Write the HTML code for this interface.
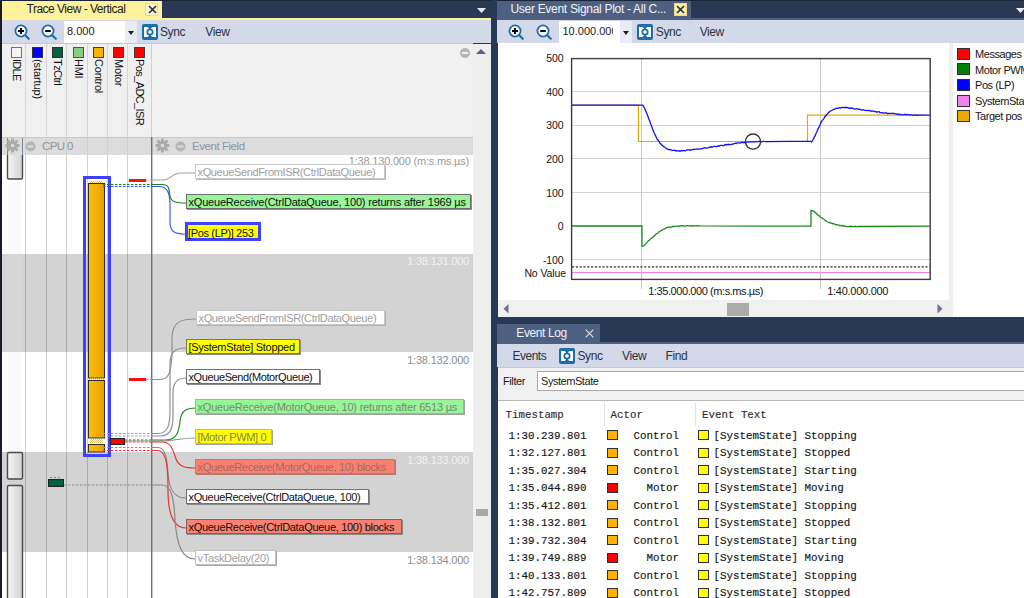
<!DOCTYPE html>
<html><head><meta charset="utf-8">
<style>
*{margin:0;padding:0;box-sizing:border-box}
html,body{width:1024px;height:598px;overflow:hidden;background:#293955;font-family:"Liberation Sans",sans-serif;font-size:12px;color:#000;position:relative}
.a{position:absolute}
.t{position:absolute;white-space:nowrap}
.mono{font-family:"Liberation Mono",monospace}
</style></head><body>
<div class="a" style="left:0px;top:0px;width:1024px;height:1px;background:#1b2336;"></div>
<div class="a" style="left:0px;top:0px;width:2px;height:598px;background:#171c28;"></div>
<div class="a" style="left:2px;top:20px;width:1px;height:578px;background:#5a6a8a;"></div>
<div class="a" style="left:2px;top:1px;width:160px;height:17px;background:#fff29d;"></div>
<span class="t " style="left:26.50px;top:3.04px;font-size:12px;line-height:12px;color:#1a1a1a;letter-spacing:-0.5px;">Trace View - Vertical</span>
<div class="a" style="left:145px;top:3px;width:13px;height:13px;background:#fff8cc;border:1px solid #eadc8c"></div>
<svg class="a" style="left:147.5px;top:5px" width="9" height="9" viewBox="0 0 9 9"><path d="M1 1L8 8M8 1L1 8" stroke="#1e2a44" stroke-width="1.6"/></svg>
<svg class="a" style="left:477px;top:8px" width="9" height="5"><path d="M0 0H9L4.5 5Z" fill="#e6e9f0"/></svg>
<div class="a" style="left:2px;top:18px;width:489px;height:2px;background:#fff29d;"></div>
<div class="a" style="left:2px;top:20px;width:489px;height:23px;background:#d3d9e8;"></div>
<div class="a" style="left:2px;top:43px;width:471px;height:1px;background:#c8c8c8;"></div>
<svg class="a" style="left:13px;top:23px" width="18" height="18" viewBox="0 0 18 18"><circle cx="8" cy="8" r="5.6" fill="#fff" stroke="#1c6eaa" stroke-width="1.8"/><path d="M12.2 12.2L15.8 15.8" stroke="#1c6eaa" stroke-width="2.2" stroke-linecap="round"/><path d="M5 8H11M8 5V11" stroke="#000" stroke-width="2"/></svg>
<svg class="a" style="left:40px;top:23px" width="18" height="18" viewBox="0 0 18 18"><circle cx="8" cy="8" r="5.6" fill="#fff" stroke="#1c6eaa" stroke-width="1.8"/><path d="M12.2 12.2L15.8 15.8" stroke="#1c6eaa" stroke-width="2.2" stroke-linecap="round"/><path d="M5.2 8H10.8" stroke="#000" stroke-width="2"/></svg>
<div class="a" style="left:64px;top:21px;width:61px;height:22px;background:#fff;"></div>
<div class="a" style="left:125px;top:21px;width:12px;height:22px;background:#e8ecf7;"></div>
<span class="t " style="left:67.00px;top:25.49px;font-size:11px;line-height:12px;color:#1a1a1a;">8.000</span>
<svg class="a" style="left:128px;top:31px" width="6" height="4"><path d="M0 0H6L3 4Z" fill="#1e1e1e"/></svg>
<svg class="a" style="left:142px;top:24px" width="16" height="16" viewBox="0 0 16 16"><rect x="0" y="0" width="16" height="16" rx="2" fill="#1c6ea8"/><rect x="2" y="3" width="12" height="10" fill="#fff"/><path d="M5.4 3C6.7 3.5 7.1 4.4 7.2 5.4H8.8C8.9 4.4 9.3 3.5 10.6 3Z" fill="#1c6ea8"/><path d="M5.4 13C6.7 12.5 7.1 11.6 7.2 10.6H8.8C8.9 11.6 9.3 12.5 10.6 13Z" fill="#1c6ea8"/><circle cx="8" cy="8" r="2.7" fill="#fff" stroke="#1c6ea8" stroke-width="1.8"/></svg>
<span class="t " style="left:160.00px;top:25.54px;font-size:12px;line-height:12px;color:#2c3244;letter-spacing:-0.4px;">Sync</span>
<span class="t " style="left:205.30px;top:25.54px;font-size:12px;line-height:12px;color:#2c3244;letter-spacing:-0.4px;">View</span>
<div class="a" style="left:2px;top:44px;width:471px;height:93px;background:#f0f0f0;"></div>
<div class="a" style="left:25px;top:44px;width:1px;height:93px;background:#d6d6d6;"></div>
<div class="a" style="left:46px;top:44px;width:1px;height:93px;background:#d6d6d6;"></div>
<div class="a" style="left:66px;top:44px;width:1px;height:93px;background:#d6d6d6;"></div>
<div class="a" style="left:87px;top:44px;width:1px;height:93px;background:#d6d6d6;"></div>
<div class="a" style="left:107px;top:44px;width:1px;height:93px;background:#d6d6d6;"></div>
<div class="a" style="left:127px;top:44px;width:1px;height:93px;background:#d6d6d6;"></div>
<div class="a" style="left:151px;top:44px;width:1px;height:93px;background:#d0d0d0;"></div>
<div class="a" style="left:11px;top:47px;width:11px;height:11px;background:#f4f4f4;border:1px solid #707070"></div>
<span class="t" style="left:23.10px;top:59px;font-size:11px;line-height:12px;color:#111;transform:rotate(90deg);transform-origin:0 0;letter-spacing:-0.7px">IDLE</span>
<div class="a" style="left:32px;top:47px;width:11px;height:11px;background:#0000ff;border:1px solid #303030"></div>
<span class="t" style="left:43.60px;top:59px;font-size:11px;line-height:12px;color:#111;transform:rotate(90deg);transform-origin:0 0;letter-spacing:-0.1px">(startup)</span>
<div class="a" style="left:52px;top:47px;width:11px;height:11px;background:#006040;border:1px solid #303030"></div>
<span class="t" style="left:64.10px;top:59px;font-size:11px;line-height:12px;color:#111;transform:rotate(90deg);transform-origin:0 0;letter-spacing:-0.55px">TzCtrl</span>
<div class="a" style="left:73px;top:47px;width:11px;height:11px;background:#88cc88;border:1px solid #505050"></div>
<span class="t" style="left:84.60px;top:59px;font-size:11px;line-height:12px;color:#111;transform:rotate(90deg);transform-origin:0 0;letter-spacing:-0.3px">HMI</span>
<div class="a" style="left:93px;top:47px;width:11px;height:11px;background:#f8b400;border:1px solid #404040"></div>
<span class="t" style="left:104.85px;top:59px;font-size:11px;line-height:12px;color:#111;transform:rotate(90deg);transform-origin:0 0;letter-spacing:-0.2px">Control</span>
<div class="a" style="left:113px;top:47px;width:11px;height:11px;background:#ff0000;border:1px solid #404040"></div>
<span class="t" style="left:125.10px;top:59px;font-size:11px;line-height:12px;color:#111;transform:rotate(90deg);transform-origin:0 0;letter-spacing:-0.2px">Motor</span>
<div class="a" style="left:134px;top:47px;width:11px;height:11px;background:#ff0000;border:1px solid #404040"></div>
<span class="t" style="left:145.60px;top:59px;font-size:11px;line-height:12px;color:#111;transform:rotate(90deg);transform-origin:0 0;letter-spacing:-0.6px">Pos_ADC_ISR</span>
<div class="a" style="left:2px;top:137px;width:471px;height:18px;background:#dcdcdc;"></div>
<div class="a" style="left:2px;top:137px;width:471px;height:1px;background:#c8c8c8;"></div>
<div class="a" style="left:25px;top:138px;width:1px;height:17px;background:#d0d0d0;"></div>
<div class="a" style="left:46px;top:138px;width:1px;height:17px;background:#d0d0d0;"></div>
<div class="a" style="left:66px;top:138px;width:1px;height:17px;background:#d0d0d0;"></div>
<div class="a" style="left:87px;top:138px;width:1px;height:17px;background:#d0d0d0;"></div>
<div class="a" style="left:107px;top:138px;width:1px;height:17px;background:#d0d0d0;"></div>
<div class="a" style="left:127px;top:138px;width:1px;height:17px;background:#d0d0d0;"></div>
<div class="a" style="left:7px;top:138px;width:1px;height:17px;background:#7a88a4;"></div>
<div class="a" style="left:22px;top:138px;width:1px;height:17px;background:#7a88a4;"></div>
<svg class="a" style="left:5px;top:138px" width="15" height="15" viewBox="0 0 15 15"><g fill="#a9aca9"><rect x="6" y="0.5" width="3" height="4" transform="rotate(0 7.5 7.5)"/><rect x="6" y="0.5" width="3" height="4" transform="rotate(45 7.5 7.5)"/><rect x="6" y="0.5" width="3" height="4" transform="rotate(90 7.5 7.5)"/><rect x="6" y="0.5" width="3" height="4" transform="rotate(135 7.5 7.5)"/><rect x="6" y="0.5" width="3" height="4" transform="rotate(180 7.5 7.5)"/><rect x="6" y="0.5" width="3" height="4" transform="rotate(225 7.5 7.5)"/><rect x="6" y="0.5" width="3" height="4" transform="rotate(270 7.5 7.5)"/><rect x="6" y="0.5" width="3" height="4" transform="rotate(315 7.5 7.5)"/><circle cx="7.5" cy="7.5" r="4.6"/></g><circle cx="7.5" cy="7.5" r="1.8" fill="#dcdcdc"/></svg>
<svg class="a" style="left:25px;top:141px" width="11" height="11"><circle cx="5.5" cy="5.5" r="5" fill="#b4b4b4"/><rect x="2.5" y="4.5" width="6" height="2" fill="#dcdcdc"/></svg>
<span class="t " style="left:42.00px;top:139.62px;font-size:11.5px;line-height:12px;color:#8e94a0;letter-spacing:-0.6px;">CPU 0</span>
<svg class="a" style="left:155px;top:138px" width="15" height="15" viewBox="0 0 15 15"><g fill="#a9aca9"><rect x="6" y="0.5" width="3" height="4" transform="rotate(0 7.5 7.5)"/><rect x="6" y="0.5" width="3" height="4" transform="rotate(45 7.5 7.5)"/><rect x="6" y="0.5" width="3" height="4" transform="rotate(90 7.5 7.5)"/><rect x="6" y="0.5" width="3" height="4" transform="rotate(135 7.5 7.5)"/><rect x="6" y="0.5" width="3" height="4" transform="rotate(180 7.5 7.5)"/><rect x="6" y="0.5" width="3" height="4" transform="rotate(225 7.5 7.5)"/><rect x="6" y="0.5" width="3" height="4" transform="rotate(270 7.5 7.5)"/><rect x="6" y="0.5" width="3" height="4" transform="rotate(315 7.5 7.5)"/><circle cx="7.5" cy="7.5" r="4.6"/></g><circle cx="7.5" cy="7.5" r="1.8" fill="#dcdcdc"/></svg>
<svg class="a" style="left:175px;top:141px" width="11" height="11"><circle cx="5.5" cy="5.5" r="5" fill="#b4b4b4"/><rect x="2.5" y="4.5" width="6" height="2" fill="#dcdcdc"/></svg>
<span class="t " style="left:192.00px;top:139.62px;font-size:11.5px;line-height:12px;color:#8e94a0;letter-spacing:-0.45px;">Event Field</span>
<div class="a" style="left:2px;top:155px;width:471px;height:443px;background:#fff;"></div>
<div class="a" style="left:2px;top:254px;width:471px;height:98px;background:#d3d3d3;"></div>
<div class="a" style="left:2px;top:452px;width:471px;height:100px;background:#d3d3d3;"></div>
<div class="a" style="left:25px;top:155px;width:1px;height:443px;background:#cfcfcf;"></div>
<div class="a" style="left:25px;top:254px;width:1px;height:98px;background:#ababab;"></div>
<div class="a" style="left:25px;top:452px;width:1px;height:100px;background:#ababab;"></div>
<div class="a" style="left:46px;top:155px;width:1px;height:443px;background:#cfcfcf;"></div>
<div class="a" style="left:46px;top:254px;width:1px;height:98px;background:#ababab;"></div>
<div class="a" style="left:46px;top:452px;width:1px;height:100px;background:#ababab;"></div>
<div class="a" style="left:66px;top:155px;width:1px;height:443px;background:#cfcfcf;"></div>
<div class="a" style="left:66px;top:254px;width:1px;height:98px;background:#ababab;"></div>
<div class="a" style="left:66px;top:452px;width:1px;height:100px;background:#ababab;"></div>
<div class="a" style="left:87px;top:155px;width:1px;height:443px;background:#cfcfcf;"></div>
<div class="a" style="left:87px;top:254px;width:1px;height:98px;background:#ababab;"></div>
<div class="a" style="left:87px;top:452px;width:1px;height:100px;background:#ababab;"></div>
<div class="a" style="left:107px;top:155px;width:1px;height:443px;background:#cfcfcf;"></div>
<div class="a" style="left:107px;top:254px;width:1px;height:98px;background:#ababab;"></div>
<div class="a" style="left:107px;top:452px;width:1px;height:100px;background:#ababab;"></div>
<div class="a" style="left:127px;top:155px;width:1px;height:443px;background:#cfcfcf;"></div>
<div class="a" style="left:127px;top:254px;width:1px;height:98px;background:#ababab;"></div>
<div class="a" style="left:127px;top:452px;width:1px;height:100px;background:#ababab;"></div>
<span class="t" style="left:169.00px;width:300px;text-align:right;top:155.19px;font-size:11px;line-height:12px;color:#9a9a9a;letter-spacing:-0.2px;">1:38.130.000 (m:s.ms.µs)</span>
<span class="t" style="left:169.00px;width:300px;text-align:right;top:254.69px;font-size:11px;line-height:12px;color:#f2f2f2;letter-spacing:-0.2px;">1:38.131.000</span>
<span class="t" style="left:169.00px;width:300px;text-align:right;top:354.19px;font-size:11px;line-height:12px;color:#8c8c8c;letter-spacing:-0.2px;">1:38.132.000</span>
<span class="t" style="left:169.00px;width:300px;text-align:right;top:453.69px;font-size:11px;line-height:12px;color:#f2f2f2;letter-spacing:-0.2px;">1:38.133.000</span>
<span class="t" style="left:169.00px;width:300px;text-align:right;top:553.69px;font-size:11px;line-height:12px;color:#8c8c8c;letter-spacing:-0.2px;">1:38.134.000</span>
<div class="a" style="left:473px;top:44px;width:18px;height:554px;background:#efefef;"></div>
<div class="a" style="left:476px;top:509px;width:12px;height:7px;background:#a6aaa6;"></div>
<svg class="a" style="left:459px;top:47px" width="12" height="12"><circle cx="6" cy="6" r="5" fill="#b4b4b4"/><rect x="3" y="5" width="6" height="2" fill="#f0f0f0"/></svg>
<svg class="a" style="left:476px;top:48px" width="11" height="7"><path d="M0 6H10L5 1Z" fill="#5a6480"/></svg>
<svg class="a" style="left:0;top:0" width="491" height="598" viewBox="0 0 491 598"><defs><linearGradient id="gI" x1="0" x2="1"><stop offset="0" stop-color="#f6f6f6"/><stop offset="1" stop-color="#d2d2d2"/></linearGradient><linearGradient id="gO" x1="0" x2="1"><stop offset="0" stop-color="#ffbe10"/><stop offset="1" stop-color="#e8a000"/></linearGradient><pattern id="hatch" width="2" height="2" patternUnits="userSpaceOnUse"><rect width="1" height="1" fill="#e2e2e2"/><rect x="1" y="1" width="1" height="1" fill="#e2e2e2"/></pattern><pattern id="hatchO" width="2" height="2" patternUnits="userSpaceOnUse"><rect width="1" height="1" fill="#f0c860"/><rect x="1" y="1" width="1" height="1" fill="#f0c860"/></pattern><clipPath id="cl"><rect x="2" y="155" width="471" height="443"/></clipPath></defs><g clip-path="url(#cl)"><rect x="8" y="182" width="14" height="270" fill="url(#hatch)" opacity="0.35"/><rect x="7.5" y="130" width="15" height="49" rx="1.5" fill="url(#gI)" stroke="#4a4a4a" stroke-width="1.4"/><rect x="7.5" y="452.5" width="15" height="26.5" rx="1.5" fill="url(#gI)" stroke="#4a4a4a" stroke-width="1.4"/><rect x="7.5" y="485.5" width="15" height="130" rx="1.5" fill="url(#gI)" stroke="#4a4a4a" stroke-width="1.4"/><rect x="84.5" y="177.5" width="25" height="278" fill="#fff" fill-opacity="0" stroke="#4040ff" stroke-width="3"/><rect x="90" y="181" width="13" height="2" fill="url(#hatchO)"/><rect x="88.5" y="183.5" width="16" height="194.5" fill="url(#gO)" stroke="#303030" stroke-width="1"/><rect x="88.5" y="378" width="16" height="2" fill="url(#hatchO)"/><rect x="88.5" y="380.5" width="16" height="57.5" fill="url(#gO)" stroke="#303030" stroke-width="1"/><rect x="90" y="439" width="13" height="4" fill="url(#hatchO)"/><rect x="88.5" y="444.5" width="16" height="7.5" fill="url(#gO)" stroke="#303030" stroke-width="1"/><rect x="129" y="179" width="17" height="3" fill="#ff1010"/><rect x="129" y="378" width="17" height="3" fill="#ff1010"/><rect x="110.5" y="438.5" width="14" height="6" fill="#ff0000" stroke="#202020" stroke-width="1"/><rect x="48.5" y="479.5" width="15" height="7" fill="#006040" stroke="#202020" stroke-width="1"/><path d="M50 477.5h2M54 477.5h2M58 477.5h2" stroke="#888" stroke-width="1"/><rect x="151" y="155" width="1.4" height="443" fill="#707070"/><path d="M146 180H152" stroke="#a0a0a0" stroke-width="1.2" stroke-dasharray="2.5 1.5"/><path d="M103 184.5H152" stroke="#208020" stroke-width="1.2" stroke-dasharray="2.5 1.5"/><path d="M103 186.5H152" stroke="#3050ff" stroke-width="1.2" stroke-dasharray="2.5 1.5"/><path d="M146 379.5H152" stroke="#a0a0a0" stroke-width="1.2" stroke-dasharray="2.5 1.5"/><path d="M103 433.5H152" stroke="#a0a0a0" stroke-width="1.2" stroke-dasharray="2.5 1.5"/><path d="M103 436H152" stroke="#a0a0a0" stroke-width="1.2" stroke-dasharray="2.5 1.5"/><path d="M125 440H152" stroke="#209020" stroke-width="1.2" stroke-dasharray="2.5 1.5"/><path d="M125 442H152" stroke="#ff3030" stroke-width="1.2" stroke-dasharray="2.5 1.5"/><path d="M103 447.5H152" stroke="#909090" stroke-width="1.2" stroke-dasharray="2.5 1.5"/><path d="M103 450.5H152" stroke="#ff3030" stroke-width="1.2" stroke-dasharray="2.5 1.5"/><path d="M64 485H152" stroke="#909090" stroke-width="1.2" stroke-dasharray="2.5 1.5"/><path d="M152 180H163C172 180 171 173 181 173H195" fill="none" stroke="#a0a0a0" stroke-width="1.2"/><path d="M152 184.5H162C170 184.5 169 190 170 196C171 202 176 203 186 203" fill="none" stroke="#208020" stroke-width="1.2"/><path d="M152 186.5H159C168 186.5 170 194 170 205V222C170 232 175 234 185 234" fill="none" stroke="#3a58ff" stroke-width="1.15"/><path d="M152 379.5H160C170 379.5 171 370 172 355V337C173 322 180 319 196 319" fill="none" stroke="#909090" stroke-width="1.2"/><path d="M152 433.5H158C168 433.5 170 425 170 410V364C170 352 175 348 186 348" fill="none" stroke="#909090" stroke-width="1.2"/><path d="M152 436H160C171 436 173 428 173 415V392C173 382 178 378 186 378" fill="none" stroke="#909090" stroke-width="1.2"/><path d="M152 440H166C177 440 179 431 180 421C181 411 186 408 196 408" fill="none" stroke="#209020" stroke-width="1.2"/><path d="M125 441H160C175 441 180 438 195 438" fill="none" stroke="#909090" stroke-width="1.2"/><path d="M152 442H162C172 442 173 451 176 459C179 467 186 468 195 468" fill="none" stroke="#f03030" stroke-width="1.2"/><path d="M152 447.5H158C166 447.5 167 460 168 473C169 491 175 498 186 498" fill="none" stroke="#888888" stroke-width="1.2"/><path d="M152 450.5H158C167 450.5 168 470 168 490C168 516 174 528 186 528" fill="none" stroke="#f03030" stroke-width="1.2"/><path d="M152 485H162C172 485 174 500 175 520C177 546 182 559 195 559" fill="none" stroke="#888888" stroke-width="1.2"/></g><rect x="151" y="137" width="1.4" height="18" fill="#707070"/></svg>
<div class="a" style="left:195px;top:164px;width:190px;height:15px;background:#fff;border:1px solid #c8c8c8;box-shadow:1px 1px 0 #b8b8b8;"></div>
<span class="t " style="left:197.50px;top:166.49px;font-size:11px;line-height:12px;color:#a0a0a0;letter-spacing:-0.35px;">xQueueSendFromISR(CtrlDataQueue)</span>
<div class="a" style="left:186px;top:194px;width:285px;height:15px;background:#98f598;border:1px solid #6e6e6e;box-shadow:1px 1px 0 #8a8a8a;"></div>
<span class="t " style="left:188.50px;top:196.49px;font-size:11px;line-height:12px;color:#101010;letter-spacing:-0.2px;">xQueueReceive(CtrlDataQueue, 100) returns after 1969 µs</span>
<div class="a" style="left:185px;top:222px;width:76px;height:19px;background:#ffff00;border:3px solid #4040ff"></div>
<span class="t " style="left:188.00px;top:226.79px;font-size:11px;line-height:12px;color:#101010;letter-spacing:-0.35px;">[Pos (LP)] 253</span>
<div class="a" style="left:196px;top:310px;width:189px;height:15px;background:#fff;border:1px solid #c8c8c8;box-shadow:1px 1px 0 #b0b0b0;"></div>
<span class="t " style="left:198.50px;top:312.49px;font-size:11px;line-height:12px;color:#a0a0a0;letter-spacing:-0.35px;">xQueueSendFromISR(CtrlDataQueue)</span>
<div class="a" style="left:186px;top:339px;width:114px;height:15px;background:#ffff00;border:1px solid #7a7a50;box-shadow:1px 1px 0 #8a8a8a;"></div>
<span class="t " style="left:188.50px;top:341.49px;font-size:11px;line-height:12px;color:#101010;letter-spacing:-0.3px;">[SystemState] Stopped</span>
<div class="a" style="left:186px;top:369px;width:134px;height:15px;background:#fff;border:1px solid #707070;box-shadow:1px 1px 0 #8a8a8a;"></div>
<span class="t " style="left:188.50px;top:371.49px;font-size:11px;line-height:12px;color:#101010;letter-spacing:-0.4px;">xQueueSend(MotorQueue)</span>
<div class="a" style="left:195px;top:399px;width:269px;height:15px;background:#98f598;border:1px solid #98b898;box-shadow:1px 1px 0 #a0a0a0;"></div>
<span class="t " style="left:197.50px;top:401.49px;font-size:11px;line-height:12px;color:#6e8e6e;letter-spacing:-0.2px;">xQueueReceive(MotorQueue, 10) returns after 6513 µs</span>
<div class="a" style="left:195px;top:429px;width:77px;height:15px;background:#ffff00;border:1px solid #c8b878;box-shadow:1px 1px 0 #a0a0a0;"></div>
<span class="t " style="left:197.50px;top:431.49px;font-size:11px;line-height:12px;color:#84844a;letter-spacing:-0.35px;">[Motor PWM] 0</span>
<div class="a" style="left:195px;top:459px;width:200px;height:15px;background:#fa8072;border:1px solid #c07870;box-shadow:1px 1px 0 #b07870;"></div>
<span class="t " style="left:197.50px;top:461.49px;font-size:11px;line-height:12px;color:#a06a62;letter-spacing:-0.3px;">xQueueReceive(MotorQueue, 10) blocks</span>
<div class="a" style="left:186px;top:489px;width:183px;height:15px;background:#fff;border:1px solid #707070;box-shadow:1px 1px 0 #8a8a8a;"></div>
<span class="t " style="left:188.50px;top:491.49px;font-size:11px;line-height:12px;color:#101010;letter-spacing:-0.35px;">xQueueReceive(CtrlDataQueue, 100)</span>
<div class="a" style="left:186px;top:519px;width:216px;height:15px;background:#fa8072;border:1px solid #806060;box-shadow:1px 1px 0 #8a8a8a;"></div>
<span class="t " style="left:188.50px;top:521.49px;font-size:11px;line-height:12px;color:#101010;letter-spacing:-0.3px;">xQueueReceive(CtrlDataQueue, 100) blocks</span>
<div class="a" style="left:195px;top:550px;width:81px;height:15px;background:#fff;border:1px solid #c0c0c0;box-shadow:1px 1px 0 #a8a8a8;"></div>
<span class="t " style="left:197.50px;top:552.49px;font-size:11px;line-height:12px;color:#a0a0a0;letter-spacing:-0.3px;">vTaskDelay(20)</span>
<div class="a" style="left:491px;top:0px;width:6px;height:598px;background:#293955;"></div>
<div class="a" style="left:497px;top:1px;width:194px;height:17px;background:#4d6082;"></div>
<span class="t " style="left:510.50px;top:3.04px;font-size:12px;line-height:12px;color:#f4f4f8;letter-spacing:-0.3px;">User Event Signal Plot - All C...</span>
<div class="a" style="left:674px;top:3px;width:13px;height:13px;background:#fff29d;border:1px solid #e8d98a"></div>
<svg class="a" style="left:676px;top:5px" width="9" height="9" viewBox="0 0 9 9"><path d="M1 1L8 8M8 1L1 8" stroke="#1e2a44" stroke-width="1.6"/></svg>
<svg class="a" style="left:1016px;top:8px" width="9" height="5"><path d="M0 0H9L4.5 5Z" fill="#e6e9f0"/></svg>
<div class="a" style="left:497px;top:18px;width:527px;height:2px;background:#4d6082;"></div>
<div class="a" style="left:497px;top:20px;width:527px;height:23px;background:#d3d9e8;"></div>
<svg class="a" style="left:507px;top:23px" width="18" height="18" viewBox="0 0 18 18"><circle cx="8" cy="8" r="5.6" fill="#fff" stroke="#1c6eaa" stroke-width="1.8"/><path d="M12.2 12.2L15.8 15.8" stroke="#1c6eaa" stroke-width="2.2" stroke-linecap="round"/><path d="M5 8H11M8 5V11" stroke="#000" stroke-width="2"/></svg>
<svg class="a" style="left:535px;top:23px" width="18" height="18" viewBox="0 0 18 18"><circle cx="8" cy="8" r="5.6" fill="#fff" stroke="#1c6eaa" stroke-width="1.8"/><path d="M12.2 12.2L15.8 15.8" stroke="#1c6eaa" stroke-width="2.2" stroke-linecap="round"/><path d="M5.2 8H10.8" stroke="#000" stroke-width="2"/></svg>
<div class="a" style="left:559px;top:21px;width:61px;height:22px;background:#fff;"></div>
<div class="a" style="left:620px;top:21px;width:11.5px;height:22px;background:#e8ecf7;"></div>
<div class="a" style="left:559px;top:21px;width:54px;height:22px;overflow:hidden">
<span class="t " style="left:3.50px;top:4.49px;font-size:11px;line-height:12px;color:#1a1a1a;">10.000.000</span>
</div>
<svg class="a" style="left:623px;top:31px" width="6" height="4"><path d="M0 0H6L3 4Z" fill="#1e1e1e"/></svg>
<svg class="a" style="left:637px;top:24px" width="16" height="16" viewBox="0 0 16 16"><rect x="0" y="0" width="16" height="16" rx="2" fill="#1c6ea8"/><rect x="2" y="3" width="12" height="10" fill="#fff"/><path d="M5.4 3C6.7 3.5 7.1 4.4 7.2 5.4H8.8C8.9 4.4 9.3 3.5 10.6 3Z" fill="#1c6ea8"/><path d="M5.4 13C6.7 12.5 7.1 11.6 7.2 10.6H8.8C8.9 11.6 9.3 12.5 10.6 13Z" fill="#1c6ea8"/><circle cx="8" cy="8" r="2.7" fill="#fff" stroke="#1c6ea8" stroke-width="1.8"/></svg>
<span class="t " style="left:655.80px;top:25.54px;font-size:12px;line-height:12px;color:#2c3244;letter-spacing:-0.4px;">Sync</span>
<span class="t " style="left:699.70px;top:25.54px;font-size:12px;line-height:12px;color:#2c3244;letter-spacing:-0.4px;">View</span>
<div class="a" style="left:498px;top:43px;width:526px;height:274px;background:#fff;"></div>
<div class="a" style="left:949px;top:43px;width:4px;height:274px;background:#efefef;"></div>
<svg class="a" style="left:0;top:0" width="1024" height="320" viewBox="0 0 1024 320"><path d="M572 91.5H930" stroke="#d2d2d2" stroke-width="1"/><path d="M572 125.5H930" stroke="#d2d2d2" stroke-width="1"/><path d="M572 158.5H930" stroke="#d2d2d2" stroke-width="1"/><path d="M572 192.5H930" stroke="#d2d2d2" stroke-width="1"/><path d="M572 259.5H930" stroke="#d2d2d2" stroke-width="1"/><path d="M641.5 59V289" stroke="#cacaca" stroke-width="1"/><path d="M820.5 59V289" stroke="#cacaca" stroke-width="1"/><path d="M572 266.9H930" stroke="#303030" stroke-width="1.2" stroke-dasharray="2.2 1.6"/><path d="M572 272.5H930" stroke="#f07ef0" stroke-width="1.2"/><path d="M572 105.2H638.4V141.5H807.5V115.2H925" fill="none" stroke="#f0a800" stroke-width="1.2"/><polyline points="572.0,105.2 642.7,105.2 643.4,106.2 644.5,108.0 645.7,110.7 647.0,114.0 648.0,116.5 649.0,119.3 650.0,121.8 651.0,124.7 652.0,127.3 653.0,130.1 654.0,132.6 654.9,134.4 656.0,136.6 656.9,138.9 657.9,140.0 659.0,141.4 660.0,143.4 661.0,144.1 662.0,145.4 663.0,146.0 664.0,146.9 665.0,147.2 665.9,148.3 666.9,149.0 668.0,149.2 668.9,149.7 669.9,149.9 670.9,149.6 671.9,150.4 673.0,150.4 674.0,150.3 675.0,150.2 675.9,151.0 676.8,150.6 677.7,150.9 678.8,151.0 680.0,150.8 680.8,151.0 681.7,150.4 682.7,150.8 683.7,150.4 684.8,150.8 685.8,150.7 686.9,149.9 687.9,149.9 689.0,149.8 690.0,150.4 691.0,149.8 691.9,149.9 692.8,149.5 693.8,149.5 694.7,149.3 695.6,149.1 696.6,149.2 697.7,149.0 698.8,149.1 700.0,148.8 700.9,148.9 701.7,148.7 702.7,148.7 703.6,148.2 704.6,147.7 705.6,148.1 706.7,148.1 707.7,147.9 708.8,147.4 709.8,147.4 710.9,146.8 711.9,147.2 713.0,146.9 714.0,146.5 715.0,146.1 716.0,146.7 717.0,146.7 718.0,145.7 719.0,146.2 720.0,145.7 721.0,145.3 722.0,145.3 723.0,145.6 724.0,145.5 725.0,144.6 726.0,145.0 727.0,144.3 728.0,144.8 729.0,144.3 730.0,144.6 731.0,144.6 732.1,144.0 733.1,144.3 734.2,143.5 735.3,143.2 736.3,143.5 737.4,142.9 738.5,142.9 739.5,142.9 740.5,143.0 741.5,142.4 742.4,142.2 743.4,142.8 744.2,142.2 745.0,142.7 746.3,142.5 747.4,141.9 748.3,141.9 749.2,141.9 750.0,142.0 750.9,141.9 751.9,141.8 753.0,141.8 753.9,142.1 754.9,141.7 756.0,141.6 757.1,141.8 758.3,141.4 759.5,141.4 760.6,142.0 761.7,141.6 762.8,141.6 763.6,141.2 764.4,141.5 765.0,141.7 811.8,141.2 811.8,141.7 812.6,140.5 814.0,137.6 814.9,136.2 815.9,133.7 817.0,131.5 818.0,128.9 819.0,127.1 820.0,125.0 821.0,122.4 822.0,120.6 823.0,119.6 824.0,118.4 825.0,116.5 826.0,115.5 827.0,114.5 827.9,113.2 828.9,112.3 830.0,111.3 830.9,110.8 831.8,110.5 832.8,109.7 833.9,109.3 834.9,109.2 836.0,108.2 836.9,108.4 837.9,108.3 838.9,107.8 839.9,107.6 841.0,108.0 842.0,107.4 843.0,107.3 844.0,107.5 844.9,107.8 845.8,107.3 846.8,107.5 847.8,107.6 848.8,108.2 850.0,107.9 850.9,108.4 851.7,107.9 852.6,108.2 853.5,108.6 854.5,109.0 855.5,108.8 856.5,108.7 857.6,108.8 858.8,109.3 860.0,109.2 860.9,109.9 861.7,110.1 862.7,109.6 863.6,109.8 864.6,110.4 865.6,110.4 866.7,110.7 867.7,110.5 868.8,110.4 869.8,110.7 870.9,111.3 871.9,111.0 873.0,111.2 874.0,111.4 875.0,111.5 876.0,111.6 877.0,112.2 878.0,111.7 879.0,111.7 880.0,112.6 881.0,112.7 882.0,112.9 883.0,112.6 884.0,113.1 885.0,113.2 886.0,112.7 887.0,113.3 888.0,113.5 889.0,113.4 890.0,113.4 891.0,113.3 892.0,113.5 893.0,113.4 894.0,113.4 895.0,113.9 896.0,113.8 897.1,114.3 898.1,113.7 899.1,114.6 900.1,114.4 901.1,114.7 902.1,114.8 903.1,114.8 904.0,114.6 905.0,114.2 906.1,114.9 907.2,114.4 908.3,114.6 909.5,115.0 910.6,114.9 911.8,114.9 912.9,115.4 914.0,115.1 915.1,114.9 916.0,114.9 916.9,115.4 917.7,115.1 918.4,115.4 919.0,115.1 930.0,115.2" fill="none" stroke="#1010f0" stroke-width="1.3"/><polyline points="572.0,226.0 642.0,226.0 642.0,246.0 642.8,246.2 644.0,245.8 644.8,245.0 645.8,243.9 646.9,242.7 648.0,241.3 648.9,240.6 649.9,239.8 651.0,238.4 652.0,237.9 653.0,237.1 654.0,236.2 655.0,235.3 656.0,234.0 657.0,233.6 658.0,233.1 659.0,231.8 660.0,231.2 661.0,230.6 662.0,230.2 663.0,229.5 664.0,229.1 664.9,228.9 665.9,227.9 666.9,227.6 668.0,227.3 668.9,227.1 669.8,226.9 670.7,227.3 671.7,227.1 672.7,226.4 673.8,226.5 675.0,226.3 675.9,226.2 676.7,226.1 677.6,226.3 678.5,226.2 679.5,226.0 680.5,225.8 681.5,225.9 682.6,225.7 683.8,226.0 685.0,226.1 685.9,225.8 686.9,225.6 687.9,225.6 689.0,225.8 690.2,225.9 691.4,226.0 692.5,225.7 693.7,226.0 694.8,225.9 695.9,225.8 696.9,225.7 697.9,225.8 698.7,225.9 699.4,225.7 700.0,225.9 811.0,226.2 811.0,210.3 811.7,210.5 813.0,211.1 813.8,211.2 814.8,212.2 815.9,213.1 817.0,214.2 818.0,215.1 819.0,215.5 820.0,216.7 821.0,217.5 822.0,217.9 823.0,218.8 824.0,219.2 824.9,220.3 825.9,220.8 826.9,221.5 828.0,222.0 828.9,222.3 829.9,222.8 830.9,223.0 831.9,223.1 832.9,223.8 834.0,223.7 835.0,224.2 836.0,224.9 837.0,224.6 837.9,224.8 838.9,225.0 839.9,225.8 840.9,225.4 842.0,225.5 842.9,226.2 843.9,225.8 844.8,226.3 845.8,226.3 846.8,226.5 847.8,226.6 848.9,226.4 850.0,226.6 851.0,226.1 852.0,226.6 853.2,226.5 854.3,226.6 855.5,226.2 856.6,226.7 857.7,226.8 858.6,226.2 859.4,226.4 860.0,226.5 930.0,226.2" fill="none" stroke="#1a8c1a" stroke-width="1.3"/><circle cx="753" cy="141.6" r="7.6" fill="none" stroke="#333" stroke-width="1.3"/><rect x="571.6" y="58.6" width="358.6" height="220.8" fill="none" stroke="#3c3c3c" stroke-width="1.4"/></svg>
<span class="t" style="left:503.50px;width:60px;text-align:right;top:52.16px;font-size:10.5px;line-height:12px;color:#141414;letter-spacing:-0.1px;">500</span>
<span class="t" style="left:503.50px;width:60px;text-align:right;top:85.76px;font-size:10.5px;line-height:12px;color:#141414;letter-spacing:-0.1px;">400</span>
<span class="t" style="left:503.50px;width:60px;text-align:right;top:119.36px;font-size:10.5px;line-height:12px;color:#141414;letter-spacing:-0.1px;">300</span>
<span class="t" style="left:503.50px;width:60px;text-align:right;top:152.96px;font-size:10.5px;line-height:12px;color:#141414;letter-spacing:-0.1px;">200</span>
<span class="t" style="left:503.50px;width:60px;text-align:right;top:186.56px;font-size:10.5px;line-height:12px;color:#141414;letter-spacing:-0.1px;">100</span>
<span class="t" style="left:503.50px;width:60px;text-align:right;top:220.16px;font-size:10.5px;line-height:12px;color:#141414;letter-spacing:-0.1px;">0</span>
<span class="t" style="left:503.50px;width:60px;text-align:right;top:253.76px;font-size:10.5px;line-height:12px;color:#141414;letter-spacing:-0.1px;">-100</span>
<span class="t" style="left:486.00px;width:80px;text-align:right;top:266.66px;font-size:10.5px;line-height:12px;color:#141414;letter-spacing:-0.1px;">No Value</span>
<span class="t " style="left:648.20px;top:284.69px;font-size:11px;line-height:12px;color:#141414;letter-spacing:-0.42px;">1:35.000.000 (m:s.ms.µs)</span>
<span class="t " style="left:827.20px;top:284.69px;font-size:11px;line-height:12px;color:#141414;letter-spacing:-0.27px;">1:40.000.000</span>
<div class="a" style="left:957px;top:47.8px;width:12.5px;height:12px;background:#ff0000;border:1px solid #303030"></div>
<span class="t " style="left:975.00px;top:47.99px;font-size:11px;line-height:12px;color:#141414;letter-spacing:-0.45px;">Messages</span>
<div class="a" style="left:957px;top:63.4px;width:12.5px;height:12px;background:#008000;border:1px solid #303030"></div>
<span class="t " style="left:975.00px;top:63.59px;font-size:11px;line-height:12px;color:#141414;letter-spacing:-0.45px;">Motor PWM</span>
<div class="a" style="left:957px;top:79.0px;width:12.5px;height:12px;background:#0000ff;border:1px solid #303030"></div>
<span class="t " style="left:975.00px;top:79.19px;font-size:11px;line-height:12px;color:#141414;letter-spacing:-0.45px;">Pos (LP)</span>
<div class="a" style="left:957px;top:94.6px;width:12.5px;height:12px;background:#ee82ee;border:1px solid #303030"></div>
<span class="t " style="left:975.00px;top:94.79px;font-size:11px;line-height:12px;color:#141414;letter-spacing:-0.45px;">SystemState</span>
<div class="a" style="left:957px;top:110.2px;width:12.5px;height:12px;background:#f0a800;border:1px solid #303030"></div>
<span class="t " style="left:975.00px;top:110.39px;font-size:11px;line-height:12px;color:#141414;letter-spacing:-0.45px;">Target pos</span>
<div class="a" style="left:498px;top:300px;width:451px;height:17px;background:#f0f0f0;"></div>
<svg class="a" style="left:503px;top:304px" width="6" height="10"><path d="M5.5 0V9.5L0.5 4.75Z" fill="#6a7490"/></svg>
<svg class="a" style="left:937px;top:304px" width="6" height="10"><path d="M0.5 0V9.5L5.5 4.75Z" fill="#6a7490"/></svg>
<div class="a" style="left:727px;top:303px;width:22px;height:12.5px;background:#aaacaa;"></div>
<div class="a" style="left:497px;top:317px;width:527px;height:7px;background:#293955;"></div>
<div class="a" style="left:497px;top:324px;width:103px;height:18px;background:#4d6082;"></div>
<span class="t " style="left:516.30px;top:327.14px;font-size:12px;line-height:12px;color:#f0f2f6;letter-spacing:-0.4px;">Event Log</span>
<svg class="a" style="left:585px;top:329px" width="9" height="9" viewBox="0 0 9 9"><path d="M0.7 0.7L8.3 8.3M8.3 0.7L0.7 8.3" stroke="#d8dce6" stroke-width="1.2"/></svg>
<div class="a" style="left:497px;top:342px;width:527px;height:2px;background:#4d6082;"></div>
<div class="a" style="left:497px;top:344px;width:527px;height:23px;background:#d3d9e8;"></div>
<span class="t " style="left:512.50px;top:349.84px;font-size:12px;line-height:12px;color:#2c3244;letter-spacing:-0.5px;">Events</span>
<svg class="a" style="left:559px;top:348px" width="16" height="16" viewBox="0 0 16 16"><rect x="0" y="0" width="16" height="16" rx="2" fill="#1c6ea8"/><rect x="2" y="3" width="12" height="10" fill="#fff"/><path d="M5.4 3C6.7 3.5 7.1 4.4 7.2 5.4H8.8C8.9 4.4 9.3 3.5 10.6 3Z" fill="#1c6ea8"/><path d="M5.4 13C6.7 12.5 7.1 11.6 7.2 10.6H8.8C8.9 11.6 9.3 12.5 10.6 13Z" fill="#1c6ea8"/><circle cx="8" cy="8" r="2.7" fill="#fff" stroke="#1c6ea8" stroke-width="1.8"/></svg>
<span class="t " style="left:577.50px;top:349.84px;font-size:12px;line-height:12px;color:#2c3244;letter-spacing:-0.4px;">Sync</span>
<span class="t " style="left:622.00px;top:349.84px;font-size:12px;line-height:12px;color:#2c3244;letter-spacing:-0.4px;">View</span>
<span class="t " style="left:665.50px;top:349.84px;font-size:12px;line-height:12px;color:#2c3244;letter-spacing:-0.4px;">Find</span>
<div class="a" style="left:498px;top:367px;width:526px;height:34px;background:#f0f0f0;"></div>
<div class="a" style="left:498px;top:367px;width:526px;height:1px;background:#c8c8c8;"></div>
<span class="t " style="left:503.00px;top:374.69px;font-size:11px;line-height:12px;color:#1a1a1a;letter-spacing:-0.4px;">Filter</span>
<div class="a" style="left:537px;top:371px;width:500px;height:20px;background:#fff;border:1px solid #a8a8a8"></div>
<span class="t " style="left:541.00px;top:375.19px;font-size:11px;line-height:12px;color:#1a1a1a;letter-spacing:-0.45px;">SystemState</span>
<div class="a" style="left:498px;top:400px;width:526px;height:1px;background:#b8b8b8;"></div>
<div class="a" style="left:498px;top:401px;width:526px;height:197px;background:#fff;"></div>
<div class="a" style="left:604px;top:403px;width:1px;height:23px;background:#e2e2e2;"></div>
<div class="a" style="left:695px;top:403px;width:1px;height:23px;background:#e2e2e2;"></div>
<span class="t " style="left:505.50px;top:408.96px;font-size:10.8px;line-height:12px;color:#3a3030;font-family:'Liberation Mono',monospace;-webkit-text-stroke:0.15px #222;">Timestamp</span>
<span class="t " style="left:610.50px;top:408.96px;font-size:10.8px;line-height:12px;color:#3a3030;font-family:'Liberation Mono',monospace;-webkit-text-stroke:0.15px #222;">Actor</span>
<span class="t " style="left:702.00px;top:408.96px;font-size:10.8px;line-height:12px;color:#3a3030;font-family:'Liberation Mono',monospace;-webkit-text-stroke:0.15px #222;">Event Text</span>
<span class="t " style="left:508.50px;top:429.54px;font-size:10.85px;line-height:12px;color:#111;font-family:'Liberation Mono',monospace;-webkit-text-stroke:0.15px #222;">1:30.239.801</span>
<div class="a" style="left:607px;top:430.2px;width:10.5px;height:10px;background:#ffb000;border:1px solid #303030"></div>
<span class="t" style="left:599.00px;width:80px;text-align:right;top:429.54px;font-size:10.85px;line-height:12px;color:#111;font-family:'Liberation Mono',monospace;-webkit-text-stroke:0.15px #222;">Control</span>
<div class="a" style="left:698px;top:430.2px;width:10.5px;height:10px;background:#ffff00;border:1px solid #303030"></div>
<span class="t " style="left:713.50px;top:429.54px;font-size:10.85px;line-height:12px;color:#111;font-family:'Liberation Mono',monospace;-webkit-text-stroke:0.15px #222;">[SystemState] Stopping</span>
<span class="t " style="left:508.50px;top:447.04px;font-size:10.85px;line-height:12px;color:#111;font-family:'Liberation Mono',monospace;-webkit-text-stroke:0.15px #222;">1:32.127.801</span>
<div class="a" style="left:607px;top:447.7px;width:10.5px;height:10px;background:#ffb000;border:1px solid #303030"></div>
<span class="t" style="left:599.00px;width:80px;text-align:right;top:447.04px;font-size:10.85px;line-height:12px;color:#111;font-family:'Liberation Mono',monospace;-webkit-text-stroke:0.15px #222;">Control</span>
<div class="a" style="left:698px;top:447.7px;width:10.5px;height:10px;background:#ffff00;border:1px solid #303030"></div>
<span class="t " style="left:713.50px;top:447.04px;font-size:10.85px;line-height:12px;color:#111;font-family:'Liberation Mono',monospace;-webkit-text-stroke:0.15px #222;">[SystemState] Stopped</span>
<span class="t " style="left:508.50px;top:464.54px;font-size:10.85px;line-height:12px;color:#111;font-family:'Liberation Mono',monospace;-webkit-text-stroke:0.15px #222;">1:35.027.304</span>
<div class="a" style="left:607px;top:465.2px;width:10.5px;height:10px;background:#ffb000;border:1px solid #303030"></div>
<span class="t" style="left:599.00px;width:80px;text-align:right;top:464.54px;font-size:10.85px;line-height:12px;color:#111;font-family:'Liberation Mono',monospace;-webkit-text-stroke:0.15px #222;">Control</span>
<div class="a" style="left:698px;top:465.2px;width:10.5px;height:10px;background:#ffff00;border:1px solid #303030"></div>
<span class="t " style="left:713.50px;top:464.54px;font-size:10.85px;line-height:12px;color:#111;font-family:'Liberation Mono',monospace;-webkit-text-stroke:0.15px #222;">[SystemState] Starting</span>
<span class="t " style="left:508.50px;top:482.04px;font-size:10.85px;line-height:12px;color:#111;font-family:'Liberation Mono',monospace;-webkit-text-stroke:0.15px #222;">1:35.044.890</span>
<div class="a" style="left:607px;top:482.7px;width:10.5px;height:10px;background:#ff0000;border:1px solid #303030"></div>
<span class="t" style="left:599.00px;width:80px;text-align:right;top:482.04px;font-size:10.85px;line-height:12px;color:#111;font-family:'Liberation Mono',monospace;-webkit-text-stroke:0.15px #222;">Motor</span>
<div class="a" style="left:698px;top:482.7px;width:10.5px;height:10px;background:#ffff00;border:1px solid #303030"></div>
<span class="t " style="left:713.50px;top:482.04px;font-size:10.85px;line-height:12px;color:#111;font-family:'Liberation Mono',monospace;-webkit-text-stroke:0.15px #222;">[SystemState] Moving</span>
<span class="t " style="left:508.50px;top:499.54px;font-size:10.85px;line-height:12px;color:#111;font-family:'Liberation Mono',monospace;-webkit-text-stroke:0.15px #222;">1:35.412.801</span>
<div class="a" style="left:607px;top:500.2px;width:10.5px;height:10px;background:#ffb000;border:1px solid #303030"></div>
<span class="t" style="left:599.00px;width:80px;text-align:right;top:499.54px;font-size:10.85px;line-height:12px;color:#111;font-family:'Liberation Mono',monospace;-webkit-text-stroke:0.15px #222;">Control</span>
<div class="a" style="left:698px;top:500.2px;width:10.5px;height:10px;background:#ffff00;border:1px solid #303030"></div>
<span class="t " style="left:713.50px;top:499.54px;font-size:10.85px;line-height:12px;color:#111;font-family:'Liberation Mono',monospace;-webkit-text-stroke:0.15px #222;">[SystemState] Stopping</span>
<span class="t " style="left:508.50px;top:517.04px;font-size:10.85px;line-height:12px;color:#111;font-family:'Liberation Mono',monospace;-webkit-text-stroke:0.15px #222;">1:38.132.801</span>
<div class="a" style="left:607px;top:517.7px;width:10.5px;height:10px;background:#ffb000;border:1px solid #303030"></div>
<span class="t" style="left:599.00px;width:80px;text-align:right;top:517.04px;font-size:10.85px;line-height:12px;color:#111;font-family:'Liberation Mono',monospace;-webkit-text-stroke:0.15px #222;">Control</span>
<div class="a" style="left:698px;top:517.7px;width:10.5px;height:10px;background:#ffff00;border:1px solid #303030"></div>
<span class="t " style="left:713.50px;top:517.04px;font-size:10.85px;line-height:12px;color:#111;font-family:'Liberation Mono',monospace;-webkit-text-stroke:0.15px #222;">[SystemState] Stopped</span>
<span class="t " style="left:508.50px;top:534.54px;font-size:10.85px;line-height:12px;color:#111;font-family:'Liberation Mono',monospace;-webkit-text-stroke:0.15px #222;">1:39.732.304</span>
<div class="a" style="left:607px;top:535.2px;width:10.5px;height:10px;background:#ffb000;border:1px solid #303030"></div>
<span class="t" style="left:599.00px;width:80px;text-align:right;top:534.54px;font-size:10.85px;line-height:12px;color:#111;font-family:'Liberation Mono',monospace;-webkit-text-stroke:0.15px #222;">Control</span>
<div class="a" style="left:698px;top:535.2px;width:10.5px;height:10px;background:#ffff00;border:1px solid #303030"></div>
<span class="t " style="left:713.50px;top:534.54px;font-size:10.85px;line-height:12px;color:#111;font-family:'Liberation Mono',monospace;-webkit-text-stroke:0.15px #222;">[SystemState] Starting</span>
<span class="t " style="left:508.50px;top:552.04px;font-size:10.85px;line-height:12px;color:#111;font-family:'Liberation Mono',monospace;-webkit-text-stroke:0.15px #222;">1:39.749.889</span>
<div class="a" style="left:607px;top:552.7px;width:10.5px;height:10px;background:#ff0000;border:1px solid #303030"></div>
<span class="t" style="left:599.00px;width:80px;text-align:right;top:552.04px;font-size:10.85px;line-height:12px;color:#111;font-family:'Liberation Mono',monospace;-webkit-text-stroke:0.15px #222;">Motor</span>
<div class="a" style="left:698px;top:552.7px;width:10.5px;height:10px;background:#ffff00;border:1px solid #303030"></div>
<span class="t " style="left:713.50px;top:552.04px;font-size:10.85px;line-height:12px;color:#111;font-family:'Liberation Mono',monospace;-webkit-text-stroke:0.15px #222;">[SystemState] Moving</span>
<span class="t " style="left:508.50px;top:569.54px;font-size:10.85px;line-height:12px;color:#111;font-family:'Liberation Mono',monospace;-webkit-text-stroke:0.15px #222;">1:40.133.801</span>
<div class="a" style="left:607px;top:570.2px;width:10.5px;height:10px;background:#ffb000;border:1px solid #303030"></div>
<span class="t" style="left:599.00px;width:80px;text-align:right;top:569.54px;font-size:10.85px;line-height:12px;color:#111;font-family:'Liberation Mono',monospace;-webkit-text-stroke:0.15px #222;">Control</span>
<div class="a" style="left:698px;top:570.2px;width:10.5px;height:10px;background:#ffff00;border:1px solid #303030"></div>
<span class="t " style="left:713.50px;top:569.54px;font-size:10.85px;line-height:12px;color:#111;font-family:'Liberation Mono',monospace;-webkit-text-stroke:0.15px #222;">[SystemState] Stopping</span>
<span class="t " style="left:508.50px;top:587.04px;font-size:10.85px;line-height:12px;color:#111;font-family:'Liberation Mono',monospace;-webkit-text-stroke:0.15px #222;">1:42.757.809</span>
<div class="a" style="left:607px;top:587.7px;width:10.5px;height:10px;background:#ffb000;border:1px solid #303030"></div>
<span class="t" style="left:599.00px;width:80px;text-align:right;top:587.04px;font-size:10.85px;line-height:12px;color:#111;font-family:'Liberation Mono',monospace;-webkit-text-stroke:0.15px #222;">Control</span>
<div class="a" style="left:698px;top:587.7px;width:10.5px;height:10px;background:#ffff00;border:1px solid #303030"></div>
<span class="t " style="left:713.50px;top:587.04px;font-size:10.85px;line-height:12px;color:#111;font-family:'Liberation Mono',monospace;-webkit-text-stroke:0.15px #222;">[SystemState] Stopped</span>
</body></html>
